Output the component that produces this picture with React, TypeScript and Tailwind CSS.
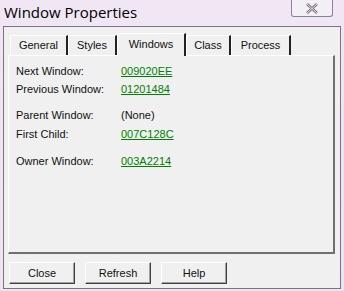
import React from 'react'

const rows = [
  { label: 'Next Window:', value: '009020EE', link: true, mt: 'mt-0' },
  { label: 'Previous Window:', value: '01201484', link: true, mt: 'mt-[5px]' },
  { label: 'Parent Window:', value: '(None)', link: false, mt: 'mt-[13px]' },
  { label: 'First Child:', value: '007C128C', link: true, mt: 'mt-[6px]' },
  { label: 'Owner Window:', value: '003A2214', link: true, mt: 'mt-[14px]' },
]

const tabs = [
  { name: 'General', w: 'w-[58px]' },
  { name: 'Styles', w: 'w-[49px]' },
  { name: 'Windows', w: 'w-[69px]' },
  { name: 'Class', w: 'w-[45px]' },
  { name: 'Process', w: 'w-[60px]' },
]

const App = () => {
  return (
    <div className="w-[344px] h-[291px] bg-gradient-to-b from-[#f1e6f3] to-[#ece4ef] flex flex-col overflow-hidden" style={{ fontFamily: '"Liberation Sans", Arial, sans-serif' }}>
      {/* Title bar */}
      <div className="h-[26px] flex items-start justify-between shrink-0">
        <span className="pl-[4px] pt-[2px] text-[15px] leading-[20px] text-black" style={{ fontFamily: '"Open Sans", "Noto Sans", sans-serif' }}>
          Window Properties
        </span>
        <div className="mr-[11px] w-[42px] h-[17px] rounded-b-[3px] border border-t-0 border-[#8b8393] bg-[#f4eef6] flex items-center justify-center">
          <svg width="14" height="11" viewBox="0 0 14 11">
            <path d="M2 1 L7 5.5 L12 1 M2 10 L7 5.5 L12 10" stroke="#6a6470" strokeWidth="2.4" fill="none" />
            <path d="M2 1 L7 5.5 L12 1 M2 10 L7 5.5 L12 10" stroke="#ffffff" strokeWidth="0.9" fill="none" />
          </svg>
        </div>
      </div>

      {/* Client area */}
      <div className="mx-[3px] mb-[2px] flex-1 border border-[#7a7385] bg-[#f0f0f0] flex flex-col">
        <div className="pl-[4px] pr-[5px] pt-[6px] flex flex-col">
          {/* Tabs */}
          <div className="flex items-end h-[22px] pl-[2px]">
            {tabs.map((t) => {
              const active = t.name === 'Windows'
              return (
                <div
                  key={t.name}
                  className={
                    active
                      ? `${t.w} h-[23px] -mb-[1px] relative z-10 bg-[#f0f0f0] border-l border-t border-white border-r-2 border-r-[#222] text-[11px] text-[#111] flex items-center justify-center pb-[2px]`
                      : `${t.w} h-[20px] bg-[#f0f0f0] border-l border-t border-white border-r-2 border-r-[#222] text-[11px] text-[#111] flex items-center justify-center`
                  }
                >
                  {t.name}
                </div>
              )
            })}
          </div>
          {/* Tab panel */}
          <div className="h-[199px] border-l border-t border-white border-r-2 border-b-2 border-r-[#707070] border-b-[#707070] px-[7px] pt-[9px] text-[11px] leading-[13px]">
            {rows.map((r) => (
              <div key={r.label} className={`flex ${r.mt}`}>
                <span className="w-[105px] text-[#111]">{r.label}</span>
                {r.link ? (
                  <span className="text-[#008000] underline">{r.value}</span>
                ) : (
                  <span className="text-[#111]">{r.value}</span>
                )}
              </div>
            ))}
          </div>
        </div>

        {/* Buttons */}
        <div className="flex gap-[10px] pl-[5px] pt-[8px]">
          {['Close', 'Refresh', 'Help'].map((b) => (
            <button
              key={b}
              className="w-[66px] h-[22px] bg-[#f0f0f0] border border-t-white border-l-white border-r-[#404040] border-b-[#404040] shadow-[inset_-1px_-1px_0_#a0a0a0] text-[11px] text-[#111] flex items-center justify-center"
            >
              {b}
            </button>
          ))}
        </div>
      </div>
    </div>
  )
}

export default App
